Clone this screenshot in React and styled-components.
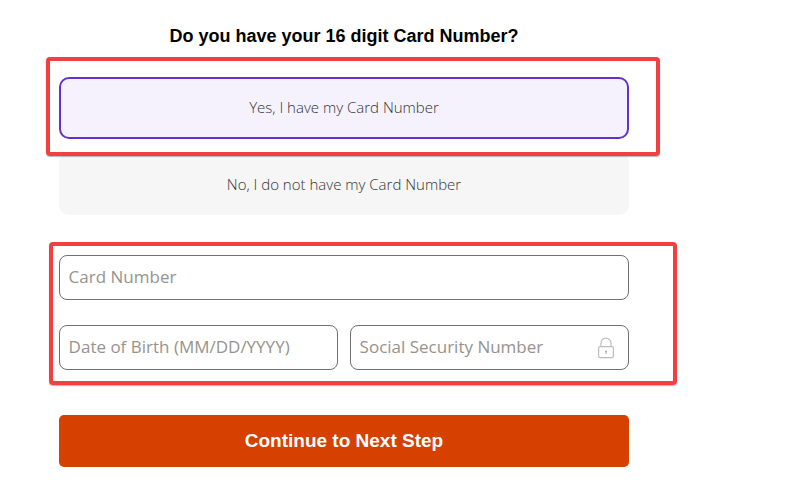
import React from "react";
import styled, { createGlobalStyle } from "styled-components";

const Global = createGlobalStyle`
  html, body { margin: 0; padding: 0; background: #fff; }
  body { font-family: "Open Sans", sans-serif; }
  * { box-sizing: border-box; }
`;

const Page = styled.div`
  position: relative;
  width: 792px;
  height: 491px;
  overflow: hidden;
  background: #fff;
`;

const Form = styled.div`
  display: flex;
  flex-direction: column;
  width: 570px;
  margin-left: 59px;
  padding-top: 26px;
`;

const Title = styled.h2`
  margin: 0 0 31px;
  height: 20px;
  font: bold 18px/20px "Liberation Sans", Arial, sans-serif;
  color: #000;
  text-align: center;
  white-space: nowrap;
`;

const Options = styled.div`
  display: flex;
  flex-direction: column;
  gap: 14px;
  margin-bottom: 40px;
`;

const Option = styled.div`
  height: 62px;
  display: flex;
  align-items: center;
  justify-content: center;
  padding-bottom: ${(p) => (p.$selected ? "2px" : "0")};
  border-radius: 10px;
  font-size: 15px;
  font-weight: 300;
  color: #333;
  background: ${(p) => (p.$selected ? "#f5f2fe" : "#f6f6f6")};
  border: ${(p) => (p.$selected ? "2px solid #6331cf" : "none")};
`;

const Fields = styled.div`
  display: flex;
  flex-direction: column;
  gap: 25px;
  margin-bottom: 45px;
`;

const Row = styled.div`
  display: grid;
  grid-template-columns: 1fr 1fr;
  gap: 12px;
`;

const Field = styled.div`
  height: 45px;
  display: flex;
  align-items: center;
  justify-content: space-between;
  padding: 0 13px 2px 8.6px;
  border: 1px solid #707070;
  border-radius: 8px;
  background: #fff;
  font-size: 17px;
  color: #98928d;
  white-space: nowrap;
`;

const LockSlot = styled.span`
  display: flex;
  margin-bottom: -2px;
`;

const Submit = styled.button`
  height: 52px;
  border: none;
  border-radius: 5px;
  background: #d64000;
  color: #fff;
  font: bold 19px "Liberation Sans", Arial, sans-serif;
`;

const Highlight = styled.div`
  position: absolute;
  left: ${(p) => p.$x}px;
  top: ${(p) => p.$y}px;
  width: ${(p) => p.$w}px;
  height: ${(p) => p.$h}px;
  border: 4px solid #f24040;
  border-radius: 4px;
  box-shadow: 0 1px 1px rgba(90, 90, 90, 0.45);
  pointer-events: none;
`;

const Lock = () => (
  <svg width="18" height="22" viewBox="0 0 18 22" fill="none" stroke="#bdbdbd" strokeWidth="1.2">
    <rect x="1.6" y="9.6" width="14.8" height="11" rx="1.4" />
    <path d="M4 9.6V6.2a5 5 0 0 1 10 0v3.4" />
    <circle cx="9" cy="14.6" r="1" fill="#a8a8a8" stroke="none" />
    <path d="M9 15v2" />
  </svg>
);

export default function App() {
  return (
    <Page>
      <Global />
      <Form>
        <Title>Do you have your 16 digit Card Number?</Title>
        <Options>
          <Option $selected>Yes, I have my Card Number</Option>
          <Option>No, I do not have my Card Number</Option>
        </Options>
        <Fields>
          <Field>Card Number</Field>
          <Row>
            <Field>Date of Birth (MM/DD/YYYY)</Field>
            <Field>
              Social Security Number
              <LockSlot>
                <Lock />
              </LockSlot>
            </Field>
          </Row>
        </Fields>
        <Submit>Continue to Next Step</Submit>
      </Form>
      <Highlight $x={46} $y={57} $w={614} $h={99} />
      <Highlight $x={49} $y={242} $w={628} $h={143} />
    </Page>
  );
}
